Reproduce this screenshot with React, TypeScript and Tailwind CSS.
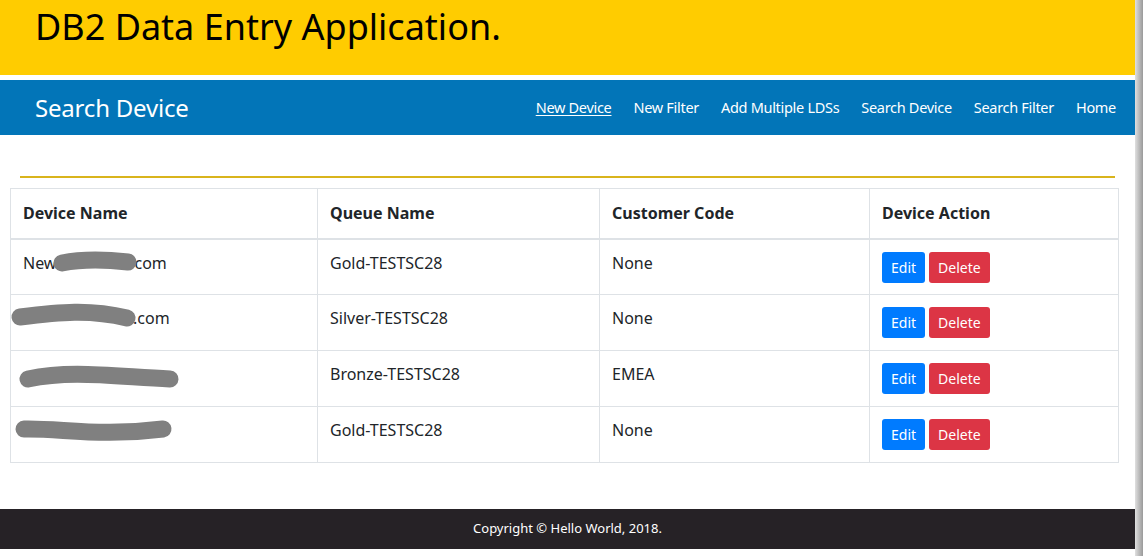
import React from "react";

const rows = [
  { pre: "New", gap: "w-[78px]", post: "com", queue: "Gold-TESTSC28", code: "None", mark: "M62 263 C82 259 110 260 128 262" },
  { pre: "", gap: "w-[110px]", post: ".com", queue: "Silver-TESTSC28", code: "None", mark: "M20 317 C60 312 90 309 127 318" },
  { pre: "", gap: "w-[10px]", post: "", queue: "Bronze-TESTSC28", code: "EMEA", mark: "M28 379 C70 370 110 376 170 379" },
  { pre: "", gap: "w-[10px]", post: "", queue: "Gold-TESTSC28", code: "None", mark: "M24 429 C60 428 100 437 163 429" },
];

const links = ["New Device", "New Filter", "Add Multiple LDSs", "Search Device", "Search Filter", "Home"];

export default function App() {
  return (
    <div className="relative w-[1143px] h-[556px] bg-white overflow-hidden text-[#212529]" style={{ fontFamily: '"Noto Sans", "Open Sans", sans-serif' }}>
      <div className="w-[1135px]">
        {/* HEADER */}
        <header className="h-[75px] bg-[#ffcc00] px-[35px] pt-[3px]">
          <h1 className="text-[36px] leading-[48px] text-black">DB2 Data Entry Application.</h1>
        </header>

        {/* NAV */}
        <nav className="mt-[5px] h-[55px] bg-[#0275b8] flex items-center justify-between pl-[35px] pr-[19px]">
          <span className="text-white text-[24px] tracking-[-0.2px]">Search Device</span>
          <div className="flex gap-[22px] text-white text-[14.5px] tracking-[-0.3px]">
            {links.map((l, i) => (
              <a key={l} className={i === 0 ? "underline underline-offset-2" : ""}>{l}</a>
            ))}
          </div>
        </nav>

        {/* DIVIDER */}
        <div className="mx-[20px] mt-[41px] h-[2px] bg-[#d9b41c]" />

        {/* TABLE */}
        <table className="ml-[10px] mt-[10px] w-[1109px] border-collapse text-[16px] table-fixed">
          <thead>
            <tr className="h-[50px] border-b-2 border-[#dee2e6]">
              <th className="w-[307px] border border-[#dee2e6] px-3 text-left font-bold">Device Name</th>
              <th className="w-[282px] border border-[#dee2e6] px-3 text-left font-bold">Queue Name</th>
              <th className="w-[270px] border border-[#dee2e6] px-3 text-left font-bold">Customer Code</th>
              <th className="border border-[#dee2e6] px-3 text-left font-bold">Device Action</th>
            </tr>
          </thead>
          <tbody>
            {rows.map((r, i) => (
              <tr key={i} className="h-[56px]">
                <td className="border border-[#dee2e6] px-3 align-top pt-[11px] whitespace-nowrap">
                  {r.pre}
                  <span className={`inline-block ${r.gap}`} />
                  {r.post}
                </td>
                <td className="border border-[#dee2e6] px-3 align-top pt-[11px]">{r.queue}</td>
                <td className="border border-[#dee2e6] px-3 align-top pt-[11px]">{r.code}</td>
                <td className="border border-[#dee2e6] px-3 align-top pt-[12px]">
                  <div className="flex gap-[4px]">
                    <button className="h-[31px] px-[9px] rounded-[3px] bg-[#007bff] text-white text-[14px]">Edit</button>
                    <button className="h-[31px] px-[9px] rounded-[3px] bg-[#dc3545] text-white text-[14px]">Delete</button>
                  </div>
                </td>
              </tr>
            ))}
          </tbody>
        </table>

        {/* FOOTER */}
        <footer className="mt-[46px] h-[40px] bg-[#262226] flex items-center justify-center text-white text-[13px]">
          Copyright © Hello World, 2018.
        </footer>
      </div>

      {/* redaction marks */}
      <svg className="absolute left-0 top-0 pointer-events-none" width="200" height="556">
        {rows.map((r, i) => (
          <path key={i} d={r.mark} stroke="#808080" strokeWidth="17" strokeLinecap="round" fill="none" />
        ))}
      </svg>

      {/* right edge shadow */}
      <div className="absolute right-0 top-0 h-full w-[8px] bg-gradient-to-r from-[#e0e0e0] to-[#9a9a9a]" />
    </div>
  );
}
